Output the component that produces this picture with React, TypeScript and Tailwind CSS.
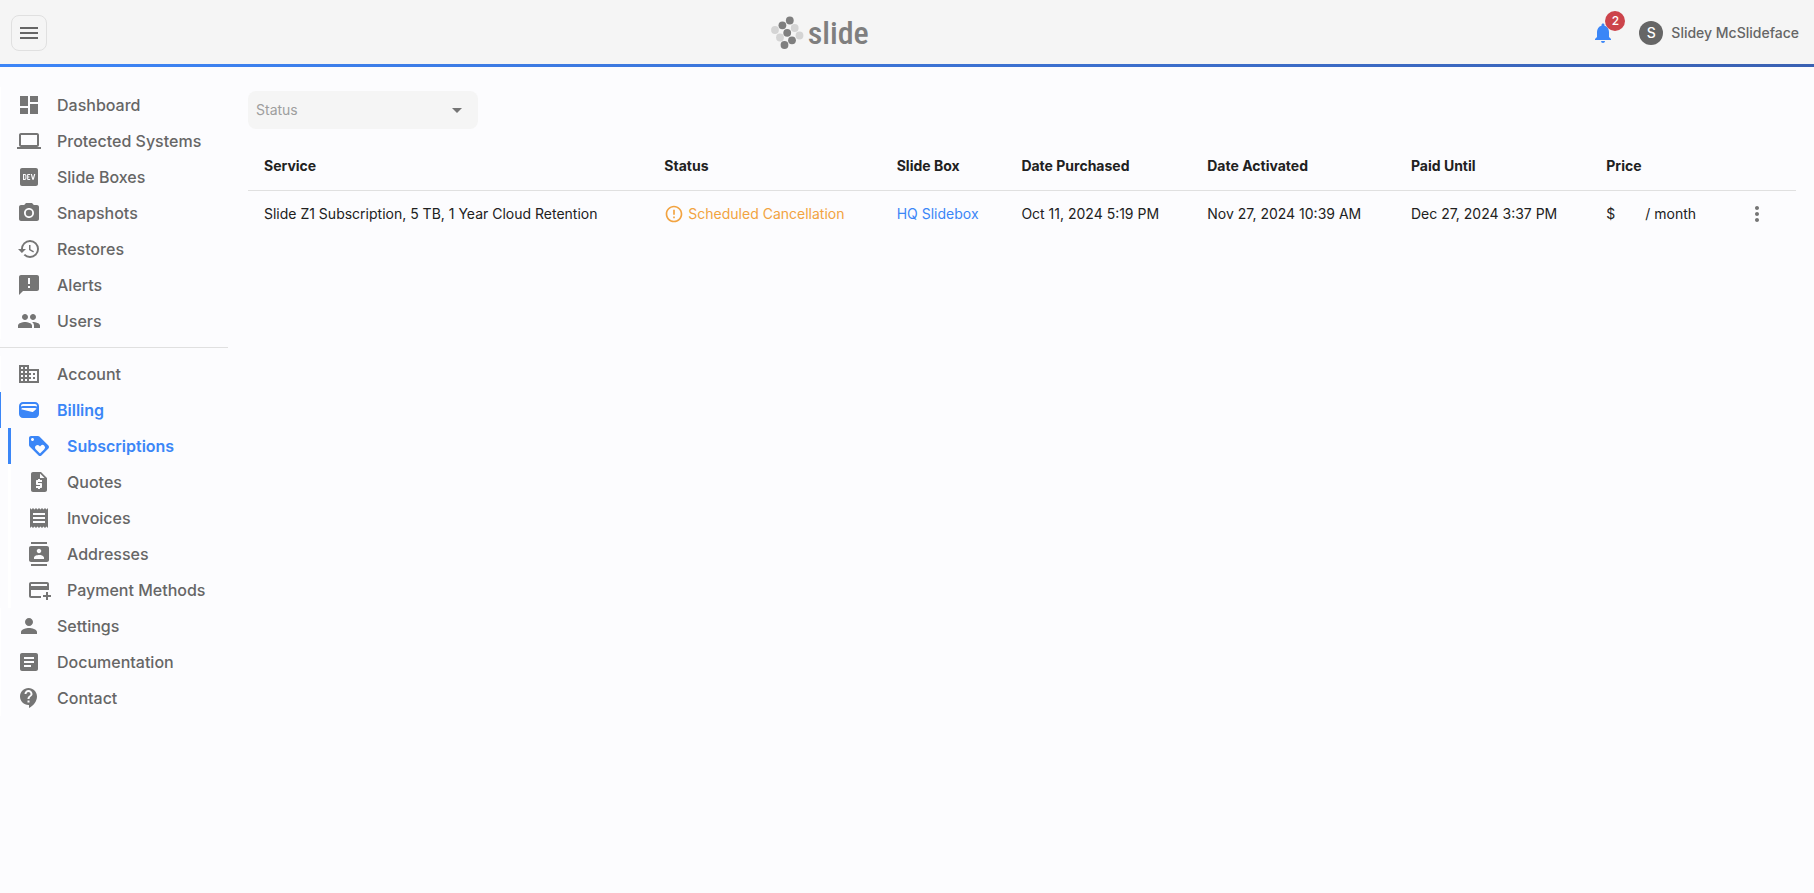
import React from "react";
import {
  MdAddCard,
  MdAnnouncement,
  MdArrowDropDown,
  MdArticle,
  MdCameraAlt,
  MdContactSupport,
  MdContacts,
  MdDashboard,
  MdDomain,
  MdErrorOutline,
  MdGroup,
  MdHistory,
  MdLaptop,
  MdLogoDev,
  MdLoyalty,
  MdMenu,
  MdMoreVert,
  MdNotifications,
  MdPerson,
  MdReceipt,
  MdRequestQuote,
  MdWallet,
} from "react-icons/md";

interface NavItem {
  label: string;
  icon: React.ElementType;
  active?: boolean;
  children?: NavItem[];
}

const mainNav: NavItem[] = [
  { label: "Dashboard", icon: MdDashboard },
  { label: "Protected Systems", icon: MdLaptop },
  { label: "Slide Boxes", icon: MdLogoDev },
  { label: "Snapshots", icon: MdCameraAlt },
  { label: "Restores", icon: MdHistory },
  { label: "Alerts", icon: MdAnnouncement },
  { label: "Users", icon: MdGroup },
];

const accountNav: NavItem[] = [
  { label: "Account", icon: MdDomain },
  {
    label: "Billing",
    icon: MdWallet,
    active: true,
    children: [
      { label: "Subscriptions", icon: MdLoyalty, active: true },
      { label: "Quotes", icon: MdRequestQuote },
      { label: "Invoices", icon: MdReceipt },
      { label: "Addresses", icon: MdContacts },
      { label: "Payment Methods", icon: MdAddCard },
    ],
  },
  { label: "Settings", icon: MdPerson },
  { label: "Documentation", icon: MdArticle },
  { label: "Contact", icon: MdContactSupport },
];

const columns = [
  "Service",
  "Status",
  "Slide Box",
  "Date Purchased",
  "Date Activated",
  "Paid Until",
  "Price",
];

const subscriptions = [
  {
    service: "Slide Z1 Subscription, 5 TB, 1 Year Cloud Retention",
    status: "Scheduled Cancellation",
    box: "HQ Slidebox",
    purchased: "Oct 11, 2024 5:19 PM",
    activated: "Nov 27, 2024 10:39 AM",
    paidUntil: "Dec 27, 2024 3:37 PM",
  },
];

const Logo: React.FC = () => (
  <a href="#" className="flex items-center gap-1 text-[#7f7f7f]">
    <svg viewBox="0 0 34 34" className="size-[34px]" aria-hidden="true">
      <g fill="#d4d4d4">
        <circle cx="5" cy="14" r="3.9" />
        <circle cx="10" cy="21.5" r="3.9" />
        <circle cx="24.7" cy="12" r="3.9" />
        <circle cx="29.5" cy="19.5" r="3.9" />
      </g>
      <g fill="#7f7f7f">
        <circle cx="19.8" cy="4.5" r="3.9" />
        <circle cx="12.4" cy="9.3" r="3.9" />
        <circle cx="17.2" cy="16.8" r="3.9" />
        <circle cx="22" cy="24.3" r="3.9" />
        <circle cx="14.5" cy="29" r="3.9" />
      </g>
    </svg>
    <span className="font-['Liberation_Sans_Narrow','Roboto_Condensed',Roboto,sans-serif] text-[32px] leading-9 font-medium">
      slide
    </span>
  </a>
);

const NavRow: React.FC<{ item: NavItem; nested?: boolean }> = ({ item, nested }) => {
  const Icon = item.icon;
  return (
    <li>
      <a
        href="#"
        className={`flex h-9 items-center gap-4 pl-4 text-base ${
          nested ? "ml-2 border-l-[3px]" : "border-l"
        } ${
          item.active
            ? "border-[#3b86f7] font-semibold text-[#3b86f7]"
            : "border-white font-medium text-[#666666]"
        }`}
      >
        <Icon className={`size-6 ${item.active ? "text-[#3b86f7]" : "text-[#757575]"}`} />
        {item.label}
      </a>
      {item.children && (
        <ul>
          {item.children.map((child) => (
            <NavRow key={child.label} item={child} nested />
          ))}
        </ul>
      )}
    </li>
  );
};

const Header: React.FC = () => (
  <header>
    <div className="flex h-16 items-center justify-between bg-[#f5f5f5] pt-[2px] pr-[15px] pl-[11px]">
      <button
        aria-label="Toggle menu"
        className="flex size-9 items-center justify-center rounded-lg border border-[#e0e0e0] text-[#666666]"
      >
        <MdMenu className="size-6" />
      </button>
      <Logo />
      <div className="flex items-center gap-6">
        <button aria-label="Notifications" className="relative text-[#3b86f7]">
          <MdNotifications className="size-6" />
          <span className="absolute -top-[10px] left-[14px] flex size-5 items-center justify-center rounded-full bg-[#cc444b] text-xs font-medium text-white">
            2
          </span>
        </button>
        <button className="flex items-center gap-2 text-sm font-medium text-[#666666]">
          <span className="flex size-6 items-center justify-center rounded-full bg-[#666666] text-sm text-white">
            S
          </span>
          Slidey McSlideface
        </button>
      </div>
    </div>
    <div className="h-[3px] bg-linear-to-r from-[#3c85f7] to-[#3a61b3]" />
  </header>
);

const SubscriptionsTable: React.FC = () => (
  <table className="mt-[14px] w-full text-left text-sm whitespace-nowrap text-[#212121]">
    <thead>
      <tr className="h-[47px] border-b border-[#e0e0e0]">
        {columns.map((column) => (
          <th key={column} className="px-4 font-bold">
            {column}
          </th>
        ))}
        <th className="px-4" aria-label="Actions" />
      </tr>
    </thead>
    <tbody>
      {subscriptions.map((row) => (
        <tr key={row.service} className="h-[47px]">
          <td className="px-4">{row.service}</td>
          <td className="px-4">
            <span className="flex items-center gap-1 text-[#f2a340]">
              <MdErrorOutline className="size-5" />
              {row.status}
            </span>
          </td>
          <td className="px-4">
            <a href="#" className="text-[#3b86f7]">
              {row.box}
            </a>
          </td>
          <td className="px-4">{row.purchased}</td>
          <td className="px-4">{row.activated}</td>
          <td className="px-4">{row.paidUntil}</td>
          <td className="px-4">
            <span className="flex gap-[30px]">
              <span>$</span>
              <span>/ month</span>
            </span>
          </td>
          <td className="px-4">
            <button
              aria-label="Row actions"
              className="flex size-[34px] items-center justify-center text-[#757575]"
            >
              <MdMoreVert className="size-6" />
            </button>
          </td>
        </tr>
      ))}
    </tbody>
  </table>
);

const App: React.FC = () => {
  return (
    <div className="min-h-screen bg-[#fcfcfe] font-[Inter,sans-serif]">
      <Header />
      <div className="flex">
        <nav className="w-57 shrink-0 pt-5">
          <ul>
            {mainNav.map((item) => (
              <NavRow key={item.label} item={item} />
            ))}
          </ul>
          <hr className="my-2 border-[#e0e0e0]" />
          <ul>
            {accountNav.map((item) => (
              <NavRow key={item.label} item={item} />
            ))}
          </ul>
        </nav>
        <main className="min-w-0 flex-1 pt-6 pr-[18px] pl-5">
          <div className="relative w-[230px]">
            <select
              aria-label="Status"
              defaultValue=""
              className="h-[38px] w-full appearance-none rounded-lg bg-[#f5f5f5] px-2 text-sm text-[#9e9e9e]"
            >
              <option value="">Status</option>
              <option value="active">Active</option>
              <option value="cancelled">Scheduled Cancellation</option>
            </select>
            <MdArrowDropDown className="pointer-events-none absolute top-[7px] right-[9px] size-6 text-[#757575]" />
          </div>
          <SubscriptionsTable />
        </main>
      </div>
    </div>
  );
};

export default App;
